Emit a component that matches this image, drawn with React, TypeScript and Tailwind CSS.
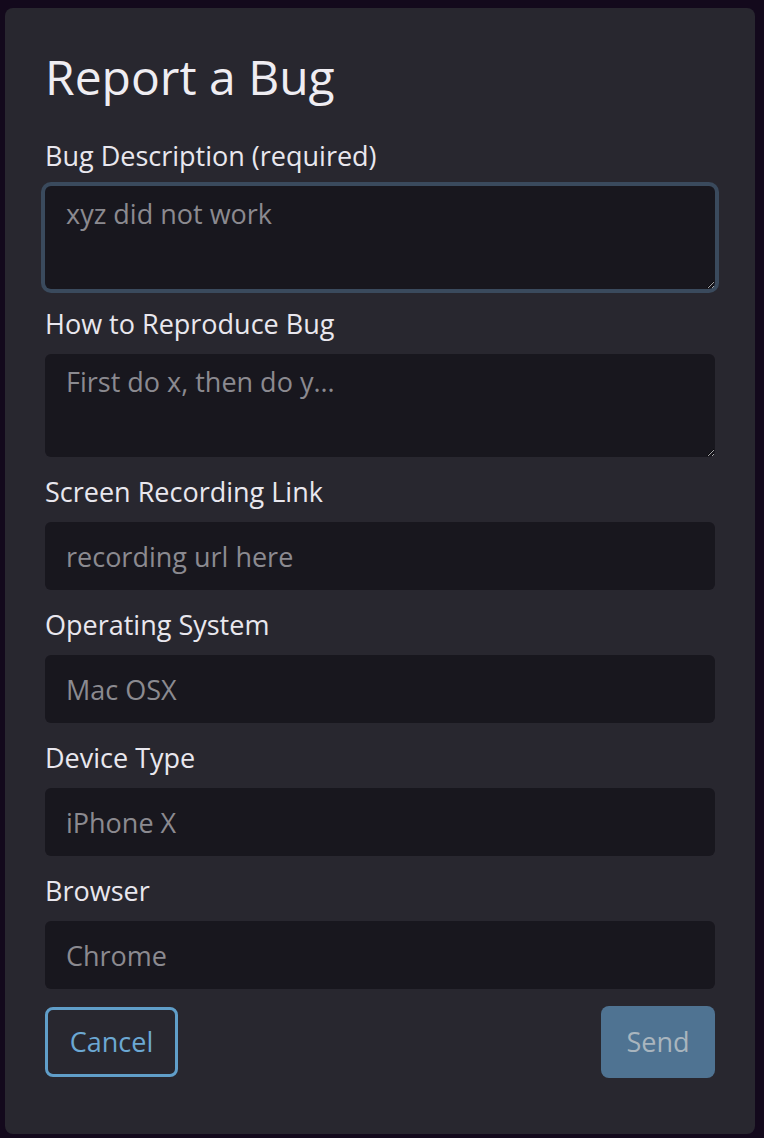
import React from "react";

const fieldBase =
  "w-full rounded-[6px] bg-[#18171e] px-[21px] text-[27px] text-[#e8e6ec] placeholder:text-[#8b8a90] outline-none scheme-dark";

function Field({
  label,
  placeholder,
  multiline,
  focused,
}: {
  label: string;
  placeholder: string;
  multiline?: boolean;
  focused?: boolean;
}) {
  return (
    <div className="flex flex-col">
      <label className="mb-[15px] text-[27px] leading-[30px] text-[#e9e7ee]">{label}</label>
      {multiline ? (
        <textarea
          placeholder={placeholder}
          className={`${fieldBase} block h-[103px] resize-y pt-[8px] leading-[39px] ${
            focused ? "shadow-[0_0_0_4px_#3a4a5d]" : ""
          }`}
        />
      ) : (
        <input placeholder={placeholder} className={`${fieldBase} h-[68px]`} />
      )}
    </div>
  );
}

export default function App() {
  return (
    <div
      className="min-h-screen bg-[#13091c] pl-[5px] pt-[8px]"
      style={{ fontFamily: '"Open Sans", "Noto Sans", sans-serif' }}
    >
      <div className="flex h-[1126px] w-[750px] flex-col rounded-[8px] bg-[#28272f] px-[40px] pt-[40px]">
        <h1 className="mb-[35px] text-[48px] leading-[58px] text-[#efedf2]">Report a Bug</h1>
        <div className="flex flex-col gap-[20px]">
          <Field label="Bug Description (required)" placeholder="xyz did not work" multiline focused />
          <Field label="How to Reproduce Bug" placeholder="First do x, then do y..." multiline />
          <Field label="Screen Recording Link" placeholder="recording url here" />
          <Field label="Operating System" placeholder="Mac OSX" />
          <Field label="Device Type" placeholder="iPhone X" />
          <Field label="Browser" placeholder="Chrome" />
        </div>
        <div className="mt-[17px] flex items-center justify-between">
          <button className="h-[70px] w-[133px] rounded-[8px] border-[3px] border-[#609ec9] text-[27px] text-[#6ca8d3]">
            Cancel
          </button>
          <button className="h-[72px] w-[114px] rounded-[8px] bg-[#4f7392] text-[27px] text-[#a9b5be]">
            Send
          </button>
        </div>
      </div>
    </div>
  );
}
